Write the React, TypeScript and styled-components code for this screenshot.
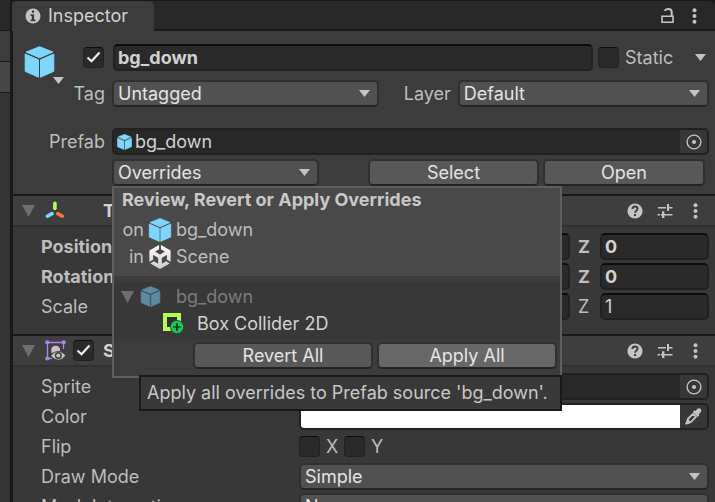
import React from "react";
import styled, { createGlobalStyle, css } from "styled-components";

const color = {
  line: "#191919",
  strip: "#282828",
  panel: "#3c3c3c",
  body: "#383838",
  header: "#3e3e3e",
  input: "#2a2a2a",
  inputEdge: "#212121",
  inputTop: "#0d0d0d",
  dropdown: "#515151",
  button: "#585858",
  buttonHover: "#676767",
  controlEdge: "#303030",
  label: "#bdbdbd",
  text: "#d2d2d2",
  icon: "#c4c4c4",
};

const GlobalStyle = createGlobalStyle`
  *, *::before, *::after { box-sizing: border-box; }
  body {
    margin: 0;
    background: ${color.body};
    color: ${color.label};
    font: 18px/24px Inter, "Liberation Sans", sans-serif;
    overflow: hidden;
  }
  button, input, select { font: inherit; color: inherit; margin: 0; }
  svg { display: block; flex: none; }
`;

/* ---------- Shell ---------- */

const Window = styled.div`
  display: flex;
  height: 100vh;
  overflow: hidden;
  background: ${color.line};
`;

const Neighbour = styled.aside`
  flex: 0 0 10px;
  margin-right: 2px;
  display: flex;
  flex-direction: column;
  background: #333;
`;

const NeighbourPart = styled.div<{ $h: number; $bg: string }>`
  height: ${(p) => p.$h}px;
  background: ${(p) => p.$bg};
  border-bottom: 1px solid ${color.line};
`;

const Inspector = styled.main`
  flex: 1;
  min-width: 0;
  display: flex;
  flex-direction: column;
`;

const TabBar = styled.div`
  flex: none;
  height: 31px;
  border-top: 1px solid ${color.line};
  display: flex;
  justify-content: space-between;
  background: linear-gradient(${color.strip} 28px, ${color.line} 28px);
  border-radius: 0 6px 0 0;
`;

const Tab = styled.button`
  display: flex;
  align-items: center;
  gap: 7px;
  width: 142px;
  padding: 0 0 0 13px;
  border: 0;
  border-radius: 5px 5px 0 0;
  background: ${color.panel};
  color: ${color.text};
`;

const TabTools = styled.div`
  display: flex;
  align-items: center;
  gap: 18px;
  padding-right: 18px;
`;

const ToolStrip = styled.div`
  display: grid;
  grid-template-columns: repeat(3, 30px);
`;

const IconButton = styled.button`
  display: grid;
  place-items: center;
  padding: 0;
  border: 0;
  background: none;
  color: ${color.icon};
`;

const Content = styled.div`
  flex: 1;
  min-height: 0;
  margin-left: 1px;
  background: ${color.body};
`;

/* ---------- Controls ---------- */

const Shell = styled.div`
  display: grid;
  align-items: center;
  min-width: 0;
  > * { grid-area: 1 / 1; }
  > svg { justify-self: end; margin-right: 9px; pointer-events: none; }
`;

const controlBox = css`
  width: 100%;
  min-width: 0;
  height: 27px;
  border: 2px solid ${color.controlEdge};
  border-bottom-color: #242424;
  border-radius: 5px;
  color: #e4e4e4;
`;

const SelectBox = styled.select`
  ${controlBox}
  appearance: none;
  padding: 0 24px 0 4px;
  background: ${color.dropdown};
  line-height: 23px;
`;

const PushButton = styled.button<{ $hover?: boolean; $align?: string }>`
  ${controlBox}
  padding: 0 4px;
  line-height: 22px;
  text-align: ${(p) => p.$align ?? "center"};
  background: ${(p) => (p.$hover ? color.buttonHover : p.$align ? color.dropdown : color.button)};
`;

const TextInput = styled.input<{ $bold?: boolean }>`
  width: 100%;
  min-width: 0;
  height: 27px;
  padding: 0 3px;
  border: 2px solid ${color.inputEdge};
  border-top-color: ${color.inputTop};
  border-radius: 5px;
  background: ${color.input};
  color: ${color.text};
  font-weight: ${(p) => (p.$bold ? 700 : 400)};
`;

const Tick = styled.span`
  display: inline-grid;
  place-items: center;
  flex: none;
  > * { grid-area: 1 / 1; }
  > svg { pointer-events: none; }
`;

const TickInput = styled.input`
  appearance: none;
  width: 21px;
  height: 21px;
  border: 1px solid ${color.inputEdge};
  border-top-color: ${color.inputTop};
  border-radius: 4px;
  background: ${color.input};
`;

const FieldFrame = styled.div`
  display: flex;
  align-items: center;
  width: 100%;
  height: 27px;
  border: 2px solid ${color.inputEdge};
  border-radius: 5px;
  background: ${color.strip};
  overflow: hidden;
`;

const FieldValue = styled.span`
  flex: 1;
  min-width: 0;
  display: flex;
  align-items: center;
  gap: 3px;
  padding-left: 3px;
  color: ${color.text};
`;

const FieldAction = styled.button`
  flex: 0 0 27px;
  align-self: stretch;
  display: grid;
  place-items: center;
  padding: 0;
  border: 0;
  background: #373737;
  color: ${color.icon};
`;

const Swatch = styled.input`
  appearance: none;
  flex: 1;
  min-width: 0;
  align-self: stretch;
  height: auto;
  padding: 0;
  border: 0;
  background: #fff;
  &::-webkit-color-swatch-wrapper { padding: 0; }
  &::-webkit-color-swatch { border: 0; }
`;

/* ---------- Object header ---------- */

const ObjectHeader = styled.header`
  padding: 13px 6px 8px 11px;
  background: ${color.panel};
`;

const Identity = styled.div`
  display: flex;
  margin-bottom: 21px;
`;

const ObjectIcon = styled.button`
  flex: 0 0 40px;
  display: flex;
  flex-direction: column;
  align-items: flex-start;
  padding: 2px 0 0;
  border: 0;
  background: none;
  > svg + svg { align-self: flex-end; margin-top: -1px; }
`;

const IdentityRows = styled.div`
  flex: 1;
  min-width: 0;
  display: grid;
  gap: 9px;
`;

const NameRow = styled.div`
  display: flex;
  align-items: center;
  gap: 5px;
  padding: 0 3px 0 19px;
  > input { margin-left: 4px; }
`;

const StaticLabel = styled.label`
  flex: none;
  width: 66px;
  padding-left: 1px;
  color: ${color.label};
`;

const TagRow = styled.div`
  display: grid;
  grid-template-columns: 48px 17fr 79px 16fr;
  align-items: center;
`;

const SideLabel = styled.label`
  padding-right: 7px;
  text-align: right;
`;

const PrefabGrid = styled.div`
  display: grid;
  grid-template-columns: 88px 1fr;
  align-items: center;
  row-gap: 4px;
`;

const PrefabActions = styled.div`
  grid-column: 2;
  position: relative;
  display: flex;
  gap: 4px;
  padding-right: 4px;
`;

const OverridesSlot = styled.div`
  flex: 23 1 0;
  min-width: 0;
  margin-right: 45px;
`;

const ActionSlot = styled.div<{ $grow: number }>`
  flex: ${(p) => p.$grow} 1 0;
  min-width: 0;
`;

/* ---------- Components ---------- */

const ComponentHeader = styled.header`
  display: flex;
  align-items: center;
  height: 33px;
  padding: 0 5px 0 9px;
  border-top: 2px solid ${color.line};
  border-bottom: 2px solid ${color.controlEdge};
  background: ${color.header};
`;

const ComponentIcon = styled.span`
  flex: none;
  width: 28px;
  margin-left: 10px;
`;

const ComponentTitle = styled.h2<{ $indent?: boolean }>`
  flex: 1;
  margin: 0 0 0 ${(p) => (p.$indent ? 30 : 9)}px;
  font-size: 18px;
  font-weight: 700;
  color: ${color.text};
`;

const Properties = styled.div`
  display: grid;
  gap: 3px;
  padding: 6px 6px 14px 28px;
`;

const Property = styled.div<{ $bold?: boolean }>`
  display: grid;
  grid-template-columns: 258px 1fr;
  align-items: center;
  height: 27px;
  font-weight: ${(p) => (p.$bold ? 700 : 400)};
`;

const Axes = styled.div`
  display: grid;
  grid-template-columns: repeat(3, 1fr);
  gap: 7px;
`;

const Axis = styled.label`
  display: grid;
  grid-template-columns: 22px 1fr;
  align-items: center;
  padding-left: 1px;
`;

const FlipOptions = styled.div`
  display: flex;
  align-items: center;
`;

const FlipOption = styled.label`
  display: flex;
  align-items: center;
  gap: 6px;
  width: 45px;
`;

/* ---------- Overrides popup ---------- */

const Popup = styled.section`
  position: absolute;
  z-index: 2;
  top: 100%;
  left: 0;
  width: 450px;
  border: 2px solid #5f5f5f;
  background: ${color.panel};
`;

const PopupHead = styled.div`
  display: grid;
  grid-template-columns: 22px 24px 1fr;
  align-items: center;
  column-gap: 4px;
  row-gap: 3px;
  padding: 0 8px 7px;
  margin-bottom: 6px;
  background: #494949;
  > svg { justify-self: center; }
`;

const PopupTitle = styled.h3`
  grid-column: 1 / -1;
  margin: 0 0 3px;
  font-size: 18px;
  line-height: 24px;
  font-weight: 700;
  color: #c8c8c8;
`;

const Relation = styled.span`
  text-align: right;
`;

const Tree = styled.ul`
  margin: 0;
  padding: 1px 0 3px;
  list-style: none;
  background: ${color.body};
`;

const TreeItem = styled.li<{ $indent: number; $gap: number; $dim?: boolean }>`
  display: flex;
  align-items: center;
  gap: ${(p) => p.$gap}px;
  height: 27px;
  padding-left: ${(p) => p.$indent}px;
  color: ${(p) => (p.$dim ? "#7c7c7c" : color.text)};
`;

const TreeIcon = styled.span`
  margin: 0 9px 0 0;
`;

const PopupActions = styled.div`
  display: grid;
  grid-template-columns: 180px 180px;
  justify-content: end;
  gap: 4px;
  padding: 2px 3px 7px;
`;

const Tooltip = styled.div`
  position: absolute;
  top: calc(100% - 1px);
  right: -2px;
  min-width: 423px;
  height: 36px;
  padding: 4px 6px;
  border: 2px solid ${color.line};
  background: #393939;
  color: #c8c8c8;
  white-space: nowrap;
`;

/* ---------- Icons ---------- */

function Cube({ w, h, dim }: { w: number; h: number; dim?: boolean }) {
  const fill = dim ? "#5b8ba3" : "#7fd6fd";
  return (
    <svg width={w} height={h} viewBox="0 0 30 32" fill={fill} stroke={fill} strokeWidth="1" strokeLinejoin="round">
      <path d="M15 .7 28.3 6 15 11.8 1.7 6Z" />
      <path d="M.7 8 14 13.8v17.4L.7 25.3Z" />
      <path d="M29.3 8 16 13.8v17.4l13.3-5.9Z" />
    </svg>
  );
}

const InfoIcon = () => (
  <svg width="16" height="16" viewBox="0 0 16 16">
    <circle cx="8" cy="8" r="7.5" fill={color.icon} />
    <path d="M6.9 2.6h2.2v2.2H6.9zM5.6 6.2h3.5v5.2h1.3v1.8H5.6v-1.8h1.2V8H5.6z" fill={color.panel} />
  </svg>
);

const LockIcon = () => (
  <svg width="14" height="16" viewBox="0 0 14 16" fill="none" stroke={color.icon}>
    <path d="M2 8.3h11v6H2z" strokeWidth="1.6" />
    <path d="M11.7 8V4.2C11.7 2 10.3 1 8.4 1 6.6 1 5.4 1.6 4.6 2.8" strokeWidth="2" />
  </svg>
);

const MoreIcon = () => (
  <svg width="5" height="16" viewBox="0 0 5 16" fill={color.icon}>
    <circle cx="2.5" cy="2.2" r="2" />
    <circle cx="2.5" cy="8" r="2" />
    <circle cx="2.5" cy="13.8" r="2" />
  </svg>
);

const HelpIcon = () => (
  <svg width="16" height="16" viewBox="0 0 16 16">
    <circle cx="8" cy="8" r="7.6" fill={color.icon} />
    <path d="M5.4 6.1C5.4 4.4 6.5 3.5 8 3.5s2.6.9 2.6 2.3c0 1.7-2.5 1.9-2.5 3.9" fill="none" stroke={color.header} strokeWidth="1.9" />
    <path d="M7 11h2.1v2H7z" fill={color.header} />
  </svg>
);

const PresetIcon = () => (
  <svg width="16" height="16" viewBox="0 0 16 16" fill={color.icon}>
    <path d="M1 4h8v1.5H1zM10 1h2v7h-2zM12 4h3.5v1.5H12zM.5 11h2.4v1.5H.5zM5 8.3h2.4V15H5zM7.4 11H15.5v1.5H7.4zM3.8 11H5v1.5H3.8z" />
  </svg>
);

const Caret = () => (
  <svg width="11" height="7" viewBox="0 0 11 7" fill={color.icon}>
    <path d="M0 0h11L5.5 7Z" />
  </svg>
);

const Foldout = () => (
  <svg width="13" height="12" viewBox="0 0 13 12" fill="#6e6e6e">
    <path d="M0 0h13L6.5 12Z" />
  </svg>
);

const CheckMark = () => (
  <svg width="15" height="13" viewBox="0 0 15 13" fill="none" stroke="#eee" strokeWidth="2.2">
    <path d="M1.5 6.5 5.5 10.3 13.5 1.5" />
  </svg>
);

const TargetIcon = () => (
  <svg width="16" height="16" viewBox="0 0 16 16">
    <circle cx="8" cy="8" r="6.9" fill="none" stroke={color.icon} strokeWidth="1.4" />
    <circle cx="8" cy="8" r="2.1" fill={color.icon} />
  </svg>
);

const DropperIcon = () => (
  <svg width="17" height="17" viewBox="0 0 17 17" fill={color.icon}>
    <path d="M12 1.2c1.3-1.3 2.8-1.2 3.7-.3s1 2.4-.3 3.7L13.6 6.4l.9.9-1.7 1.7-5-5 1.7-1.7.9.8Z" />
    <path d="M8 5.8 2.8 11 1.7 15l-.6.7.9-.4 3.8-1.2L11 8.8Z" fill="none" stroke={color.icon} strokeWidth="1.8" strokeLinejoin="round" />
    <path d="M3 11l2.5 2.5L2 15z" />
  </svg>
);

const TransformIcon = () => (
  <svg width="20" height="20" viewBox="0 0 20 20" strokeLinecap="round" strokeWidth="3.6">
    <path d="M9.9 2.3v5.2" stroke="#b4fb54" />
    <path d="M7 12.6 2.4 15.2" stroke="#7fd6fd" />
    <path d="M12.8 12.6 17.4 15.2" stroke="#ff7043" />
  </svg>
);

const SpriteRendererIcon = () => (
  <svg width="21" height="21" viewBox="0 0 21 21">
    <path d="M2.5 2.5h16V9M2.5 2.5v16H7" fill="none" stroke="#a888f0" strokeWidth="1.3" />
    <g fill="#a888f0">
      <circle cx="2.3" cy="2.3" r="2.1" />
      <circle cx="18.7" cy="2.3" r="2.1" />
      <circle cx="2.3" cy="18.5" r="2.1" />
    </g>
    <path d="M6.5 13C5.4 8 7.5 5.8 10.5 5.8s5 2 4.6 5.2Z" fill={color.icon} />
    <path d="M6 15.6C9.5 10 17 10 20.6 15.6 17 21.5 9.5 21.5 6 15.6Z" fill={color.icon} stroke={color.header} strokeWidth=".8" />
    <circle cx="13.3" cy="15.6" r="3.5" fill={color.header} />
    <circle cx="13.3" cy="15.6" r="2" fill={color.icon} />
  </svg>
);

const UnityIcon = () => (
  <svg width="24" height="24" viewBox="0 0 24 24">
    <defs>
      <linearGradient id="unity-shade" x1="0" y1="0" x2="0" y2="1">
        <stop offset="0" stopColor="#ffffff" />
        <stop offset="1" stopColor="#cccccc" />
      </linearGradient>
    </defs>
    <path
      fill="url(#unity-shade)"
      d="m12.9288 4.2939 3.7997 2.1929c.1366.077.1415.2905 0 .3675l-4.515 2.6076a.4192.4192 0 0 1-.4246 0L7.274 6.8543c-.139-.0745-.1415-.293 0-.3675l3.7972-2.193V0L1.3758 5.5977V16.793l3.7177-2.1456v-4.3858c-.0025-.1565.1813-.2682.318-.1838l4.5148 2.6076a.4252.4252 0 0 1 .2136.3676v5.2127c.0025.1565-.1813.2682-.3179.1838l-3.7996-2.1929-3.7178 2.1457L12 24l9.6954-5.5977-3.7178-2.1457-3.7996 2.1929c-.1341.082-.3229-.0248-.3179-.1838V13.053c0-.1565.087-.2956.2136-.3676l4.5149-2.6076c.134-.082.3228.0224.3179.1838v4.3858l3.7177 2.1456V5.5977L12.9288 0Z"
    />
  </svg>
);

const BoxColliderIcon = () => (
  <svg width="21" height="21" viewBox="0 0 21 21">
    <path d="M0 0h18v18H0zM4 4v10h10V4z" fill="#b4fb54" fillRule="evenodd" />
    <path d="M4 4h10v10H4z" fill="#303030" />
    <circle cx="14" cy="14" r="7" fill="#2d4a2c" />
    <circle cx="14" cy="14" r="6.2" fill="#14c95a" />
    <path d="M14 10.2v7.6M10.2 14h7.6" stroke="#12331f" strokeWidth="1.7" />
  </svg>
);

/* ---------- Composed parts ---------- */

function Dropdown({ id, label, value }: { id: string; label?: string; value: string }) {
  return (
    <Shell>
      <SelectBox id={id} aria-label={label} defaultValue={value}>
        <option>{value}</option>
      </SelectBox>
      <Caret />
    </Shell>
  );
}

function Checkbox({ id, label, checked }: { id?: string; label?: string; checked?: boolean }) {
  const [on, setOn] = React.useState(!!checked);
  return (
    <Tick>
      <TickInput type="checkbox" id={id} aria-label={label} checked={on} onChange={(e) => setOn(e.target.checked)} />
      {on && <CheckMark />}
    </Tick>
  );
}

function HeaderTools({ name }: { name: string }) {
  return (
    <ToolStrip>
      <IconButton aria-label={`${name} help`}><HelpIcon /></IconButton>
      <IconButton aria-label={`${name} presets`}><PresetIcon /></IconButton>
      <IconButton aria-label={`${name} menu`}><MoreIcon /></IconButton>
    </ToolStrip>
  );
}

function VectorRow({ name, values, bold }: { name: string; values: string[]; bold?: boolean }) {
  return (
    <Property $bold={bold}>
      <span>{name}</span>
      <Axes>
        {["X", "Y", "Z"].map((axis, i) => (
          <Axis key={axis}>
            {axis}
            <TextInput aria-label={`${name} ${axis}`} $bold={bold} defaultValue={values[i]} />
          </Axis>
        ))}
      </Axes>
    </Property>
  );
}

function OverridesPopup() {
  return (
    <Popup>
      <PopupHead>
        <PopupTitle>Review, Revert or Apply Overrides</PopupTitle>
        <Relation>on</Relation>
        <Cube w={24} h={24} />
        <span>bg_down</span>
        <Relation>in</Relation>
        <UnityIcon />
        <span>Scene</span>
      </PopupHead>
      <Tree>
        <TreeItem $indent={7} $gap={6} $dim>
          <Foldout />
          <TreeIcon><Cube w={21} h={21} dim /></TreeIcon>
          bg_down
        </TreeItem>
        <TreeItem $indent={49} $gap={13}>
          <BoxColliderIcon />
          Box Collider 2D
        </TreeItem>
      </Tree>
      <PopupActions>
        <PushButton>Revert All</PushButton>
        <PushButton $hover aria-describedby="apply-tip">Apply All</PushButton>
      </PopupActions>
      <Tooltip id="apply-tip" role="tooltip">
        Apply all overrides to Prefab source 'bg_down'.
      </Tooltip>
    </Popup>
  );
}

export default function App() {
  return (
    <>
      <GlobalStyle />
      <Window>
        <Neighbour>
          <NeighbourPart $h={31} $bg={color.strip} />
          <NeighbourPart $h={31} $bg={color.panel} />
          <NeighbourPart $h={31} $bg="#464646" />
        </Neighbour>
        <Inspector>
          <TabBar>
            <Tab><InfoIcon />Inspector</Tab>
            <TabTools>
              <IconButton aria-label="Lock"><LockIcon /></IconButton>
              <IconButton aria-label="Inspector menu"><MoreIcon /></IconButton>
            </TabTools>
          </TabBar>
          <Content>
            <ObjectHeader>
              <Identity>
                <ObjectIcon aria-label="Object icon">
                  <Cube w={31} h={32} />
                  <Caret />
                </ObjectIcon>
                <IdentityRows>
                  <NameRow>
                    <Checkbox label="Active" checked />
                    <TextInput aria-label="Name" $bold defaultValue="bg_down" />
                    <Checkbox id="static" />
                    <StaticLabel htmlFor="static">Static</StaticLabel>
                    <IconButton aria-label="Static options"><Caret /></IconButton>
                  </NameRow>
                  <TagRow>
                    <SideLabel htmlFor="tag">Tag</SideLabel>
                    <Dropdown id="tag" value="Untagged" />
                    <SideLabel htmlFor="layer">Layer</SideLabel>
                    <Dropdown id="layer" value="Default" />
                  </TagRow>
                </IdentityRows>
              </Identity>
              <PrefabGrid>
                <SideLabel as="span">Prefab</SideLabel>
                <FieldFrame>
                  <FieldValue><Cube w={15} h={16} />bg_down</FieldValue>
                  <FieldAction aria-label="Pick prefab"><TargetIcon /></FieldAction>
                </FieldFrame>
                <PrefabActions>
                  <OverridesSlot>
                    <Shell>
                      <PushButton $align="left" aria-haspopup="true" aria-expanded="true">Overrides</PushButton>
                      <Caret />
                    </Shell>
                  </OverridesSlot>
                  <ActionSlot $grow={19}><PushButton>Select</PushButton></ActionSlot>
                  <ActionSlot $grow={18}><PushButton>Open</PushButton></ActionSlot>
                  <OverridesPopup />
                </PrefabActions>
              </PrefabGrid>
            </ObjectHeader>

            <ComponentHeader>
              <Foldout />
              <ComponentIcon><TransformIcon /></ComponentIcon>
              <ComponentTitle $indent>Transform</ComponentTitle>
              <HeaderTools name="Transform" />
            </ComponentHeader>
            <Properties>
              <VectorRow name="Position" values={["0", "0", "0"]} bold />
              <VectorRow name="Rotation" values={["0", "0", "0"]} bold />
              <VectorRow name="Scale" values={["1", "1", "1"]} />
            </Properties>

            <ComponentHeader>
              <Foldout />
              <ComponentIcon><SpriteRendererIcon /></ComponentIcon>
              <Checkbox label="Sprite Renderer enabled" checked />
              <ComponentTitle>Sprite Renderer</ComponentTitle>
              <HeaderTools name="Sprite Renderer" />
            </ComponentHeader>
            <Properties>
              <Property>
                <span>Sprite</span>
                <FieldFrame>
                  <FieldValue />
                  <FieldAction aria-label="Pick sprite"><TargetIcon /></FieldAction>
                </FieldFrame>
              </Property>
              <Property>
                <label htmlFor="color">Color</label>
                <FieldFrame>
                  <Swatch id="color" type="color" defaultValue="#ffffff" />
                  <FieldAction aria-label="Pick color from screen"><DropperIcon /></FieldAction>
                </FieldFrame>
              </Property>
              <Property>
                <span>Flip</span>
                <FlipOptions>
                  <FlipOption><Checkbox />X</FlipOption>
                  <FlipOption><Checkbox />Y</FlipOption>
                </FlipOptions>
              </Property>
              <Property>
                <label htmlFor="draw-mode">Draw Mode</label>
                <Dropdown id="draw-mode" value="Simple" />
              </Property>
              <Property>
                <label htmlFor="mask">Mask Interaction</label>
                <Dropdown id="mask" value="None" />
              </Property>
            </Properties>
          </Content>
        </Inspector>
      </Window>
    </>
  );
}
